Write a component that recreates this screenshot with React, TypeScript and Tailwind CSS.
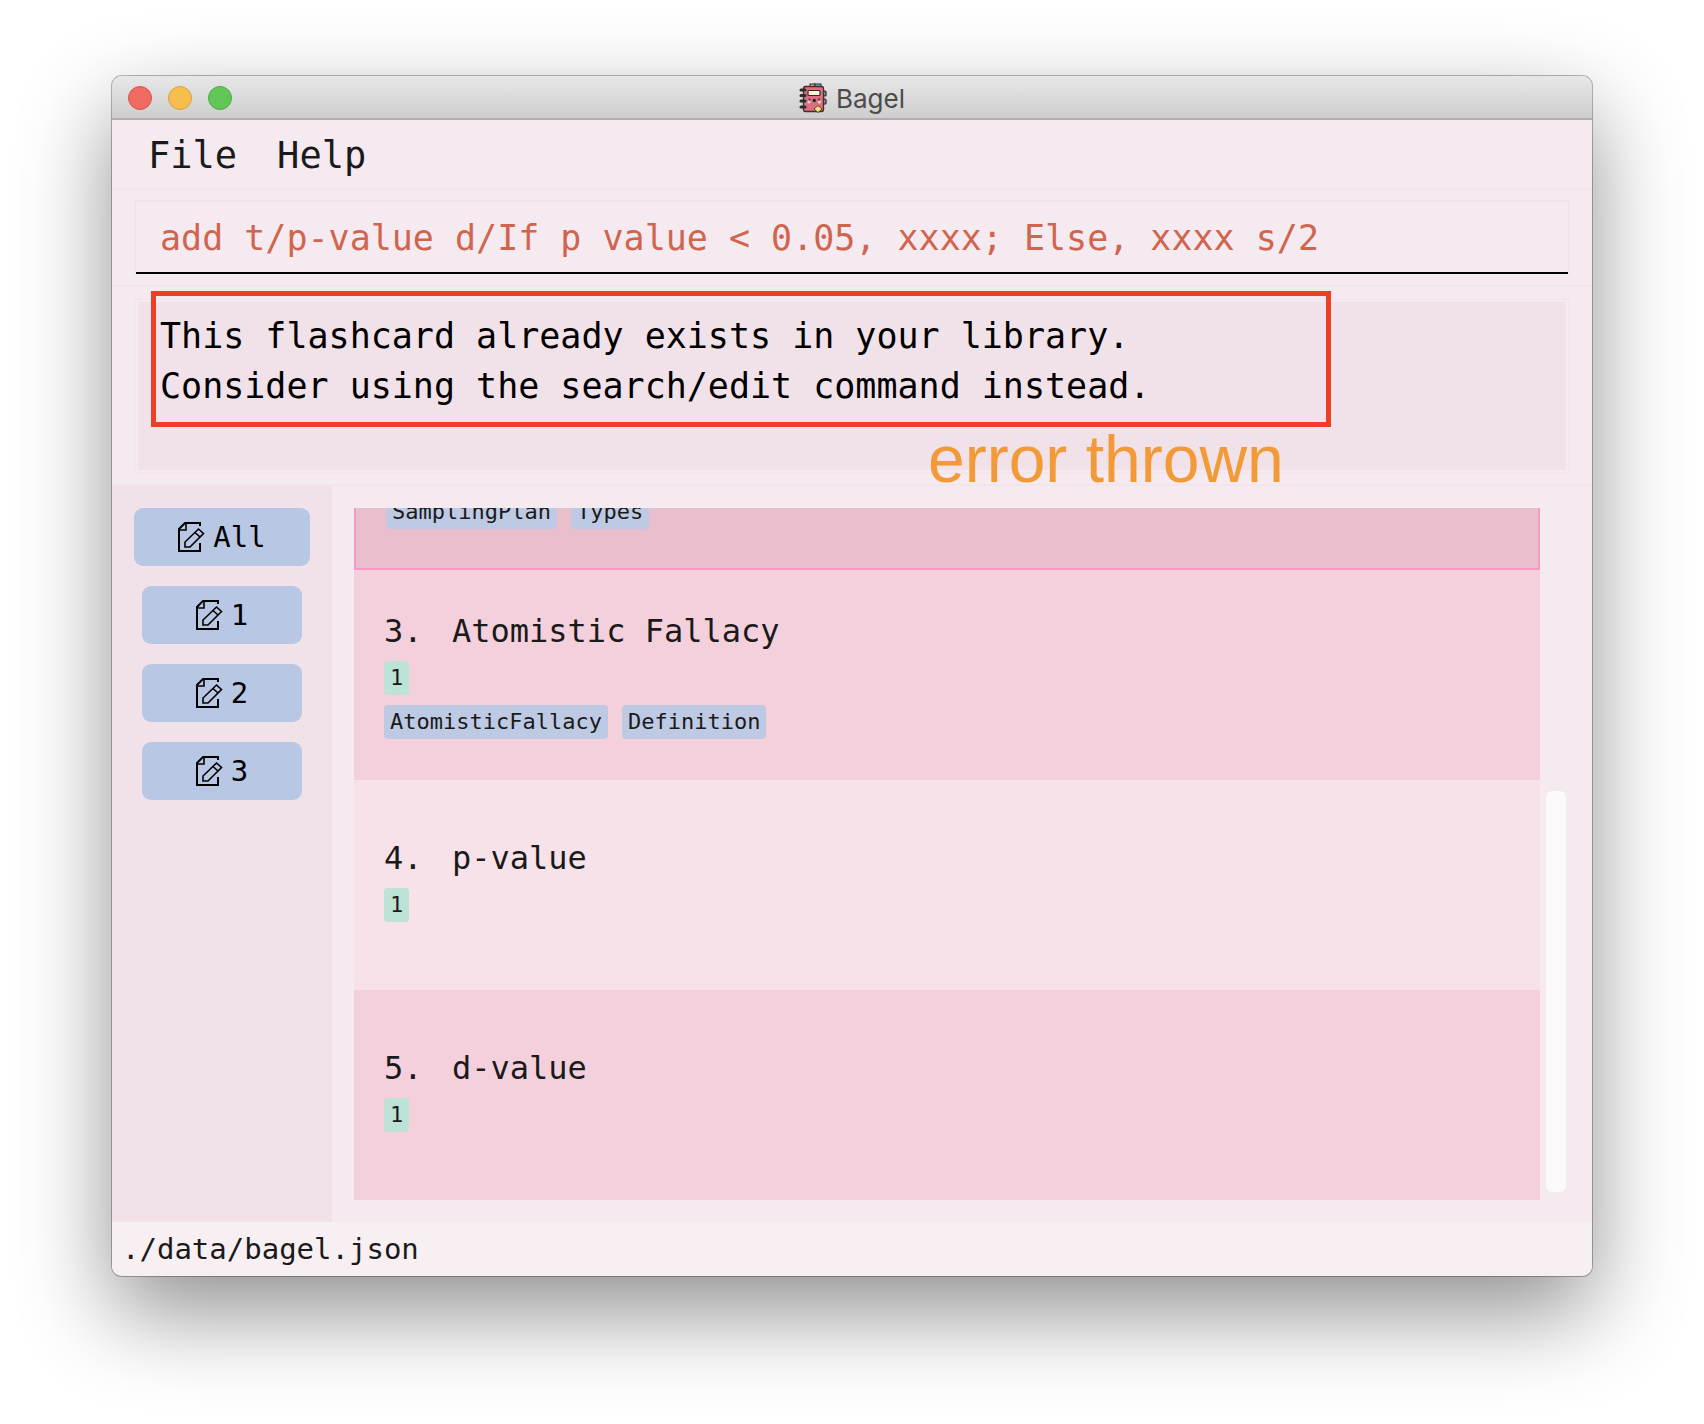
import React from "react";

type Card = { index: number | null; title: string | null; set: string | null; tags: string[]; tone: string };

const cards: Card[] = [
  { index: null, title: null, set: null, tags: ["SamplingPlan", "Types"], tone: "border-2 border-[#f49ac4] bg-[#e9bfcd]" },
  { index: 3, title: "Atomistic Fallacy", set: "1", tags: ["AtomisticFallacy", "Definition"], tone: "bg-[#f4d0dc]" },
  { index: 4, title: "p-value", set: "1", tags: [], tone: "bg-[#f7e2e9]" },
  { index: 5, title: "d-value", set: "1", tags: [], tone: "bg-[#f4d0dc]" },
];

const sets = ["1", "2", "3"];

function NotebookIcon() {
  return (
    <svg className="h-[30px] w-[28px]" viewBox="0 0 28 30" fill="none" aria-hidden="true">
      <rect x="11" y="1" width="5" height="4" fill="#f2c14b" stroke="#2b2430" />
      <rect x="16" y="1" width="6" height="4" fill="#63b6e8" stroke="#2b2430" />
      <rect x="22" y="8" width="5" height="5" rx="1" fill="#5fb565" stroke="#2b2430" strokeWidth="1.2" />
      <rect x="22" y="16" width="5" height="5" rx="1" fill="#9b8bc8" stroke="#2b2430" strokeWidth="1.2" />
      <rect x="4.500" y="3.500" width="20" height="25" rx="2" fill="#d8707f" stroke="#4a2832" strokeWidth="1.300" />
      <rect x="9" y="7.500" width="12" height="5" rx="1" fill="#fdf3d0" stroke="#3a2430" strokeWidth="1.2" />
      <circle cx="10.500" cy="16.500" r="0.900" fill="#2b2430" />
      <circle cx="20" cy="16.500" r="0.900" fill="#2b2430" />
      <circle cx="15.300" cy="17.500" r="1.700" fill="#2b2430" />
      <circle cx="10" cy="19" r="1.600" fill="#f8ccd4" />
      <circle cx="20.500" cy="19" r="1.600" fill="#f8ccd4" />
      <path d="M19 22.500l4 3.500-4 3.500-4-3.500z" fill="#f6e07a" stroke="#5a4430" />
      <path d="M2 7h4M2 12.500h4M2 18h4M2 24h4" stroke="#2b2b30" strokeWidth="3" strokeLinecap="round" />
    </svg>
  );
}

function EditDocIcon() {
  return (
    <svg className="h-[30px] w-[27px]" viewBox="0 0 27 30" fill="none" stroke="#000" strokeWidth="2" aria-hidden="true">
      <path d="M22 4V1H7L1 7v22h21v-8" />
      <path d="M1 8h7V1" strokeWidth="1.600" />
      <path d="M7 25v-5L20.500 7l5 4.500L12 25z" strokeWidth="1.600" />
      <path d="M17 10.500l5 4.500" strokeWidth="1.600" />
    </svg>
  );
}

function SetButton({ label, wide }: { label: string; wide?: boolean }) {
  return (
    <button
      type="button"
      className={
        (wide ? "w-[176px]" : "w-[160px]") +
        " flex h-[58px] items-center justify-center gap-[8px] rounded-[9px] bg-[#b8c8e4] text-[29px] leading-[40px] text-black"
      }
    >
      <EditDocIcon />
      <span>{label}</span>
    </button>
  );
}

function FlashcardRow({ card }: { card: Card }) {
  return (
    <li className={"flex h-[210px] shrink-0 flex-col justify-center gap-[10px] px-[30px] " + card.tone}>
      <div className="flex h-[40px] items-center text-[32px] leading-[40px]">
        {card.index !== null && <span className="w-[68px]">{card.index}.</span>}
        {card.title !== null && <h2>{card.title}</h2>}
      </div>
      <div className="flex h-[34px]">
        {card.set !== null && (
          <span className="rounded-[4px] bg-[#bce3d5] px-[6px] text-[22px] leading-[34px]">{card.set}</span>
        )}
      </div>
      <div className="flex gap-[14px]">
        {card.tags.map((tag) => (
          <span key={tag} className="rounded-[4px] bg-[#bec9e4] px-[6px] text-[22px] leading-[34px]">
            {tag}
          </span>
        ))}
      </div>
    </li>
  );
}

export default function App() {
  return (
    <div className="min-h-screen bg-white px-[112px] pt-[76px] pb-[148px] font-['DejaVu_Sans_Mono',monospace] text-[#1a1a1a]">
      <div className="overflow-hidden rounded-[10px] bg-[#f5eaf0] shadow-[0_0_0_1px_rgba(0,0,0,0.28),0_36px_92px_rgba(0,0,0,0.44)]">
        <header className="grid h-[44px] grid-cols-3 items-center border-b-2 border-[#b0adaf] bg-linear-to-b from-[#e7e7e7] to-[#cecece] px-[16px] pt-[2px]">
          <div className="flex gap-[16px]">
            <button type="button" aria-label="Close" className="size-[24px] rounded-full border border-[#d9534a] bg-[#ed6b60]" />
            <button type="button" aria-label="Minimize" className="size-[24px] rounded-full border border-[#d9a13c] bg-[#f5be4f]" />
            <button type="button" aria-label="Zoom" className="size-[24px] rounded-full border border-[#4dab40] bg-[#61c655]" />
          </div>
          <div className="flex items-center justify-center gap-[9px]">
            <NotebookIcon />
            <h1 className="pt-[2px] font-['Inter',sans-serif] text-[26px] leading-[32px] text-[#4b4b4b]">Bagel</h1>
          </div>
        </header>

        <nav className="flex h-[70px] items-center gap-[40px] border-b-2 border-[#f3e5eb] px-[36px] pt-[4px] text-[37px] leading-[44px]">
          <button type="button">File</button>
          <button type="button">Help</button>
        </nav>

        <div className="border-b-2 border-[#f3e5eb] px-[22px] pt-[10px] pb-[11px]">
          <div className="border-2 border-b-0 border-[#f2e3e9]">
            <input
              aria-label="Command"
              defaultValue="add t/p-value d/If p value < 0.05, xxxx; Else, xxxx s/2"
              className="block h-[72px] w-full border-b-2 border-black bg-transparent px-[24px] pt-[2px] text-[35px] text-[#d0654f] outline-none"
            />
          </div>
        </div>

        <section className="relative border-b-2 border-[#f3e5eb] px-[22px] pt-[11px] pb-[10px]">
          <div className="border-2 border-[#f4e6ec] p-[2px]">
            <p className="h-[168px] bg-[#f1e2e9] px-[22px] pt-[9px] text-[35px] leading-[50px] text-black">
              This flashcard already exists in your library.
              <br />
              Consider using the search/edit command instead.
            </p>
          </div>
          <div className="absolute top-[4px] left-[39px] h-[136px] w-[1180px] border-5 border-[#ec4026]" />
          <span className="absolute top-[134px] left-[816px] font-['Liberation_Sans',sans-serif] text-[66px] leading-[76px] whitespace-nowrap text-[#f29a38]">
            error thrown
          </span>
        </section>

        <main className="flex">
          <aside className="flex w-[220px] shrink-0 flex-col items-center gap-[20px] bg-[#f1e2e9] pt-[22px]">
            <SetButton label="All" wide />
            {sets.map((s) => (
              <SetButton key={s} label={s} />
            ))}
          </aside>
          <div className="flex min-w-0 grow gap-[6px] py-[22px] pr-[26px] pl-[22px]">
            <ul className="flex h-[692px] grow flex-col justify-end overflow-hidden">
              {cards.map((card, i) => (
                <FlashcardRow key={i} card={card} />
              ))}
            </ul>
            <div className="flex w-[20px] flex-col justify-end pb-[8px]">
              <div className="h-[401px] rounded-[6px] bg-[#fbf9fa]" />
            </div>
          </div>
        </main>

        <footer className="h-[54px] bg-[#f8eff3] px-[10px] text-[29px] leading-[54px]">./data/bagel.json</footer>
      </div>
    </div>
  );
}
